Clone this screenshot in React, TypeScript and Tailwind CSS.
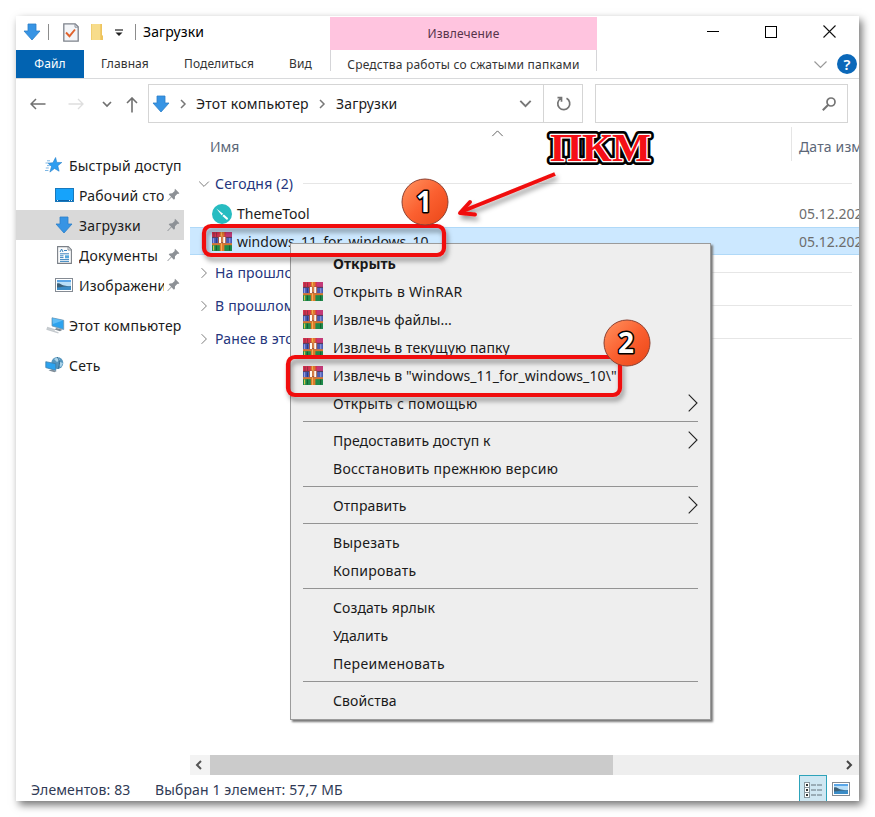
import type { ReactNode } from "react";
import clsx from "clsx";

const DownArrowIcon = () => (
  <svg width="18" height="18" viewBox="0 0 18 18" className="shrink-0">
    <path d="M5 1h8v7h4l-8 9-8-9h4z" fill="#3794e4" stroke="#2b7fc8" strokeWidth="0.8" />
  </svg>
);

const CheckDocIcon = () => (
  <svg width="16" height="19" viewBox="0 0 16 19" className="shrink-0">
    <path d="M.8.8h11.4l3 3v14.4H.8z" fill="#f3f5f8" stroke="#7d828b" strokeWidth="1.3" />
    <path d="M12 1v3.2h3" fill="none" stroke="#8c919b" />
    <path d="M3 9.5l3.5 3.7L12 6.5" fill="none" stroke="#e0622c" strokeWidth="1.9" />
  </svg>
);

const FolderIcon = () => (
  <svg width="12" height="17" viewBox="0 0 12 17" className="shrink-0">
    <path d="M0 1h10v11l2 1v4H0z" fill="#f7dc8b" />
    <path d="M9.3 1H11v11l1 1v4h-2.7z" fill="#eec45d" />
    <path d="M0 1h1v16H0z" fill="#f0ce70" />
  </svg>
);

const PinIcon = () => (
  <svg width="13" height="14" viewBox="0 0 13 14" className="shrink-0">
    <path
      d="M8 .8l4.4 4.4-1.2.7-.7-.1L8 8.2l-.1 2.6-1 .9-2.4-2.5L1 12.9l-.7.2.2-.7 3.6-3.6-2.4-2.4 1-1 2.5-.1 2.5-2.4-.1-.8z"
      fill="#8d9196"
    />
  </svg>
);

const StarIcon = () => (
  <svg width="17" height="16" viewBox="0 0 17 16" className="shrink-0">
    <path d="M10.6.5l1.2 4.9 5 .1-4 3.3 1.3 5.4-4.6-2.7-4.6 3.6 1.6-5.6L3 6.2l4.9-.5z" fill="#2e9df0" stroke="#2480cb" strokeWidth="0.6" />
    <path d="M.5 6h2.8M2 8.6h2.8M.8 11h3M0 13.5h3.4M2 3.8h3" stroke="#7eb7e4" />
  </svg>
);

const DesktopIcon = () => (
  <svg width="19" height="14" viewBox="0 0 19 14" className="shrink-0">
    <rect x=".5" y=".5" width="18" height="13" fill="#16a3fb" stroke="#1879bd" />
    <path d="M1 12.5h17" stroke="#0c62a8" />
    <path d="M2 12.5h2M14 12.5h3" stroke="#d7edfb" strokeDasharray="1 1" />
  </svg>
);

const DocumentIcon = () => (
  <svg width="15" height="18" viewBox="0 0 15 18" className="shrink-0">
    <path d="M.6.6h10.7l3.1 3.1v13.7H.6z" fill="#fbfcfd" stroke="#7b8087" strokeWidth="1.1" />
    <path d="M11 .8V4h3.2" fill="none" stroke="#8c9299" />
    <path d="M3 6l1.6-3L6 6M7 4.5h3M3 7.8h9M3 13.6h9M3 15.4h9" fill="none" stroke="#3b84be" />
    <path d="M3 9.8h3.5M3 11.6h3.5" stroke="#3b84be" />
    <rect x="8" y="9.3" width="4" height="3" fill="#57a7dc" />
  </svg>
);

const PictureIcon = ({ className }: { className?: string }) => (
  <svg width="18" height="14" viewBox="0 0 18 14" className={clsx("shrink-0", className)}>
    <rect x=".5" y=".5" width="17" height="13" fill="#fff" stroke="#858b93" />
    <path d="M2 2h14v10H2z" fill="#b9dff8" />
    <path d="M2 2h14v2H2z" fill="#5aa6e8" />
    <path d="M2 5.5c3-1 4 1.5 7 2s5 1 7 .5v2H2z" fill="#3c6078" />
    <path d="M2 9.6c5-.6 9-1.3 14-1V12H2z" fill="#3b8cc6" />
  </svg>
);

const ComputerIcon = () => (
  <svg width="19" height="17" viewBox="0 0 19 17" className="shrink-0">
    <path d="M6 .8l11.7 2.5v9.2L6 8.9z" fill="#2da3ee" stroke="#6d94ae" strokeWidth="0.8" />
    <path d="M6.5 1.3L17 3.6 7 7z" fill="#60bdf6" />
    <path d="M10.5 11l6 1.8-2.5 1.5-5.5-1.7z" fill="#7e8992" />
    <path d="M1 10.5l8 2.5M.5 12l12 3.9" stroke="#c5cace" strokeWidth="1.5" />
  </svg>
);

const NetworkIcon = () => (
  <svg width="19" height="18" viewBox="0 0 19 18" className="shrink-0">
    <circle cx="12.3" cy="7" r="6" fill="#5595bd" />
    <path d="M9 3l4-2 2 3-3 2zM15 6l3 1-2 4-2-1z" fill="#abd4ea" />
    <path d="M12 1c3 3 3 8 1 12" fill="none" stroke="#31698f" />
    <path d="M.8 5.7l10 2v6.7l-10-2.8z" fill="#2ca2ee" stroke="#3c7da9" strokeWidth="0.8" />
    <path d="M3.5 14.5l6 1.8 2.2-1.3-5-1.6z" fill="#808e99" />
  </svg>
);

const ThemeToolIcon = () => (
  <svg width="20" height="20" viewBox="0 0 20 20" className="shrink-0">
    <circle cx="10" cy="10" r="10" fill="#27bcc1" />
    <path d="M4.3 4.6l6.8 5.2-1.5 1.5z" fill="#fff" />
    <path d="M10.4 12l1.5-1.5 3.9 3.6c.7.9-.4 2.1-1.4 1.3z" fill="#fff" />
  </svg>
);

const WinRarIcon = () => (
  <svg width="20" height="19" viewBox="0 0 20 19" className="shrink-0">
    <path d="M0 0h20v5.6H0z" fill="#d8324f" />
    <path d="M14 0h6v5.6h-6z" fill="#c43a78" />
    <path d="M0 5.6h20v6.2H0z" fill="#4a5cb4" />
    <path d="M0 13h20v6H0z" fill="#1f8a4c" />
    <path d="M0 5.4h20" stroke="#4a3350" strokeWidth="0.9" />
    <path d="M0 11.2h20v2H0z" fill="#d8752c" />
    <path d="M2 .5v4.6M4.6.5v4.6" stroke="#8f2f45" />
    <path d="M1.6 6.2v4.8M17.8 6.2v4.8" stroke="#9aa5e4" />
    <path d="M4.4 6.2v4.8" stroke="#2b3a86" />
    <path d="M1.6 13.5v5" stroke="#d6c746" strokeWidth="1.2" />
    <path d="M4.4 13.5v5M17.6 13.5v5" stroke="#11602f" />
    <path d="M7.8 0h4.6v19H7.8z" fill="#dd7a2c" />
    <path d="M9 0h1v19H9z" fill="#f4ae55" />
    <path d="M6 4.6h8.2v6.6H6z" fill="#a15546" />
    <path d="M7 5h2v6H7zM11.2 5h2v6h-2z" fill="#fff8ef" />
    <path d="M9.4 3.4h1.5V10H9.4z" fill="#e38a45" />
  </svg>
);

interface ChevronProps {
  direction: "up" | "down" | "left" | "right";
  size?: number;
  className?: string;
  weight?: number;
}

const chevronPaths = {
  up: "M1 7l4-4 4 4",
  down: "M1 3l4 4 4-4",
  left: "M7 1L3 5l4 4",
  right: "M3 1l4 4-4 4",
};

const Chevron = ({ direction, size = 10, className, weight = 1.2 }: ChevronProps) => (
  <svg width={size} height={size} viewBox="0 0 10 10" className={clsx("shrink-0", className)}>
    <path d={chevronPaths[direction]} fill="none" stroke="currentColor" strokeWidth={weight} />
  </svg>
);

const TitleBar = () => (
  <div className="flex h-[63px] shrink-0 border-b border-[#d9dadc]">
    <div className="flex w-[314px] flex-col">
      <div className="flex h-[34px] items-center pb-[3px] pl-[7px]">
        <DownArrowIcon />
        <div className="ml-[7px] h-4 w-px bg-[#8c8c8c]" />
        <div className="ml-[14px] mt-[2px]"><CheckDocIcon /></div>
        <div className="ml-[12px]"><FolderIcon /></div>
        <svg width="8" height="8" viewBox="0 0 8 8" className="ml-[12px] mt-[3px]">
          <path d="M0 1h8" stroke="#222" strokeWidth="1.2" />
          <path d="M.5 3.5h7L4 7z" fill="#222" />
        </svg>
        <div className="ml-[12px] h-4 w-px bg-[#8c8c8c]" />
        <span className="ml-[7px] text-[14px] tracking-[0.1px]">Загрузки</span>
      </div>
      <div className="flex h-[28px] items-center text-[12px] tracking-[0.1px] text-[#333]">
        <span className="flex h-full w-[68px] items-center justify-center bg-[#0263b1] text-white">Файл</span>
        <span className="ml-[17px] w-[50px]">Главная</span>
        <span className="ml-[33px] w-[72px]">Поделиться</span>
        <span className="ml-[33px]">Вид</span>
      </div>
    </div>
    <div className="flex w-[267px] flex-col pt-px text-[12px]">
      <div className="flex h-[33px] items-center justify-center bg-[#ffc4df] tracking-[0.15px] text-[#56344a]">
        Извлечение
      </div>
      <div className="flex h-[21px] items-center justify-center border-x border-[#d5d5d8] pt-[8px] tracking-[0.21px] whitespace-nowrap text-[#333]">
        Средства работы со сжатыми папками
      </div>
    </div>
    <div className="flex flex-1 flex-col">
      <div className="flex h-[34px] items-center justify-end pb-[3px] pr-[23px]">
        <div className="mr-[46px] h-px w-3 bg-black" />
        <div className="mr-[46px] size-3 border border-black" />
        <svg width="13" height="13" viewBox="0 0 13 13">
          <path d="M.5.5l12 12M12.5.5l-12 12" stroke="#111" strokeWidth="1.1" />
        </svg>
      </div>
      <div className="flex h-[28px] items-center justify-end pr-[2px]">
        <Chevron direction="down" size={15} weight={0.8} className="mr-[9px] text-[#999]" />
        <span className="flex size-5 items-center justify-center rounded-full bg-[#0b68b9] text-[15px] font-semibold text-white">?</span>
      </div>
    </div>
  </div>
);

const AddressBar = () => (
  <div className="flex h-[44px] shrink-0 items-start pt-[5px]">
    <div className="flex h-[39px] w-[132px] items-center pl-[14px] text-[#707070]">
      <svg width="16" height="12" viewBox="0 0 16 12">
        <path d="M15.5 6H1M6 1L1 6l5 5" fill="none" stroke="#707070" strokeWidth="1.5" />
      </svg>
      <svg width="16" height="12" viewBox="0 0 16 12" className="ml-[22px]">
        <path d="M.5 6H15M10 1l5 5-5 5" fill="none" stroke="#dedede" strokeWidth="1.3" />
      </svg>
      <Chevron direction="down" className="ml-[18px]" weight={1.7} />
      <svg width="12" height="16" viewBox="0 0 12 16" className="ml-[14px] mt-[2px]">
        <path d="M6 15.5V1M1 6l5-5 5 5" fill="none" stroke="#707070" strokeWidth="1.6" />
      </svg>
    </div>
    <div className="flex h-[39px] w-[396px] items-center border border-[#d5d5d5] pl-[3px] text-[14px] text-[#1b1b1b]">
      <DownArrowIcon />
      <Chevron direction="right" className="ml-[8px] text-[#777]" weight={1.5} />
      <span className="ml-[8px] w-[113px] tracking-[0.22px] whitespace-nowrap">Этот компьютер</span>
      <Chevron direction="right" className="ml-[8px] text-[#777]" weight={1.5} />
      <span className="ml-[9px] tracking-[0.15px]">Загрузки</span>
      <Chevron direction="down" size={13} className="ml-auto mr-[11px] text-[#777]" weight={1.5} />
    </div>
    <div className="-ml-px flex h-[39px] w-10 items-center justify-center border border-[#d5d5d5]">
      <svg width="16" height="16" viewBox="0 0 16 16" className="ml-[2px]">
        <path d="M10.5 2.3a6 6 0 1 1-6 .3M1.5 1.7h4v4" fill="none" stroke="#747474" strokeWidth="1.7" />
      </svg>
    </div>
    <div className="ml-[12px] flex h-[39px] w-[253px] items-center justify-end border border-[#d5d5d5] pr-[11px]">
      <svg width="14" height="14" viewBox="0 0 14 14">
        <circle cx="9" cy="5" r="4" fill="none" stroke="#747474" strokeWidth="1.7" />
        <path d="M6.3 7.7L.8 13.2" stroke="#747474" strokeWidth="2" />
      </svg>
    </div>
  </div>
);

interface NavItemProps {
  icon: ReactNode;
  label: string;
  active?: boolean;
}

const PinnedItem = ({ icon, label, active }: NavItemProps) => (
  <div className={clsx("flex h-[30px] w-[168px] items-center pl-[38px] pr-1", active && "bg-[#d9d9d9]")}>
    <div className="flex w-5 justify-center">{icon}</div>
    <span className="ml-[5px] w-[85px] overflow-hidden whitespace-nowrap">{label}</span>
    <div className="ml-auto"><PinIcon /></div>
  </div>
);

const Sidebar = () => (
  <nav className="w-[174px] shrink-0 pt-[27px] text-[14px] tracking-[0.2px] text-[#1b1b1b]">
    <div className="flex h-[30px] items-center gap-[7px] pl-[29px] whitespace-nowrap"><StarIcon />Быстрый доступ</div>
    <PinnedItem icon={<DesktopIcon />} label="Рабочий стол" />
    <PinnedItem icon={<DownArrowIcon />} label="Загрузки" active />
    <PinnedItem icon={<DocumentIcon />} label="Документы" />
    <PinnedItem icon={<PictureIcon />} label="Изображения" />
    <div className="mt-[10px] flex h-[30px] items-center gap-[4px] pl-[30px] whitespace-nowrap"><ComputerIcon />Этот компьютер</div>
    <div className="mt-[10px] flex h-[30px] items-center gap-[5px] pl-[29px]"><NetworkIcon />Сеть</div>
  </nav>
);

const GroupHeader = ({ label, open }: { label: string; open?: boolean }) => (
  <div className="flex h-[33px] items-center pl-2 pr-[7px] tracking-[0.2px] text-[#25357d]">
    <Chevron direction={open ? "down" : "right"} size={12} weight={0.8} className="text-[#777]" />
    <span className="ml-[5px] whitespace-nowrap">{label}</span>
    <div className="ml-[10px] h-px flex-1 bg-[#e6e6e6]" />
  </div>
);

const FileRow = ({ icon, name, selected }: { icon: ReactNode; name: string; selected?: boolean }) => (
  <div
    className={clsx(
      "flex items-center overflow-hidden pl-[22px] whitespace-nowrap text-[#1b1b1b]",
      selected ? "h-[28px] border-y border-[#b0d9f8] bg-[#cce8ff]" : "h-[27px]"
    )}
  >
    {icon}
    <span className="ml-[5px] w-[562px] shrink-0">{name}</span>
    <span className="shrink-0 text-[#6d6d6d]">05.12.2021</span>
  </div>
);

const FileList = () => (
  <main className="flex min-w-0 flex-1 flex-col overflow-hidden text-[14px]">
    <div className="flex h-[44px] shrink-0 text-[#5c6778]">
      <span className="w-[301px] pl-[20px] pt-[13px]">Имя</span>
      <Chevron direction="up" size={13} weight={0.7} className="mt-1 text-[#555]" />
      <div className="ml-auto mt-1 h-[34px] w-[68px] overflow-hidden border-l border-[#e5e5e5] pl-[7px] pt-[9px] tracking-[0.15px] whitespace-nowrap">
        Дата изменения
      </div>
    </div>
    <GroupHeader label="Сегодня (2)" open />
    <FileRow icon={<ThemeToolIcon />} name="ThemeTool" />
    <FileRow icon={<WinRarIcon />} name="windows_11_for_windows_10" selected />
    <div className="pt-px">
      <GroupHeader label="На прошлой неделе (5)" />
      <GroupHeader label="В прошлом месяце (31)" />
      <GroupHeader label="Ранее в этом году (45)" />
    </div>
    <div className="mt-auto flex h-[20px] items-center bg-[#eee]">
      <div className="flex h-full w-[20px] items-center justify-center bg-[#f3f3f3]">
        <Chevron direction="left" className="-ml-[2px] text-[#555]" weight={2} />
      </div>
      <div className="h-full w-[403px] bg-[#cbcbcb]" />
      <Chevron direction="right" className="ml-auto mr-[5px] text-[#444]" weight={2} />
    </div>
  </main>
);

const StatusBar = () => (
  <div className="flex h-[26px] shrink-0 items-stretch pl-[15px] text-[14px] tracking-[0.12px] text-[#303a55]">
    <span className="w-[124px] pt-[5px] leading-5">Элементов: 83</span>
    <span className="pt-[5px] leading-5">Выбран 1 элемент: 57,7 МБ</span>
    <div className="ml-auto flex w-[28px] items-center justify-center border border-b-0 border-[#2da3ba] bg-[#cfe7f2] pt-[3px]">
      <svg width="18" height="16" viewBox="0 0 18 16">
        {[0.5, 5.5, 10.5].map((y) => (
          <g key={y}>
            <rect x=".5" y={y} width="5" height="5" fill="#fff" stroke="#8997a0" />
            <path d={`M2 ${y + 2.5}h2`} stroke="#333" strokeWidth="2" />
            <path d={`M7 ${y + 2.5}h5M13 ${y + 2.5}h5`} stroke="#65727a" />
          </g>
        ))}
      </svg>
    </div>
    <PictureIcon className="mr-[9px] ml-[5px] mt-[7px]" />
  </div>
);

interface MenuEntry {
  label: string;
  rar?: boolean;
  bold?: boolean;
  wide?: boolean;
  submenu?: boolean;
}

const menuSections: MenuEntry[][] = [
  [
    { label: "Открыть", bold: true },
    { label: "Открыть в WinRAR", rar: true, wide: true },
    { label: "Извлечь файлы...", rar: true },
    { label: "Извлечь в текущую папку", rar: true },
    { label: 'Извлечь в "windows_11_for_windows_10\\"', rar: true },
    { label: "Открыть с помощью", submenu: true, wide: true },
  ],
  [
    { label: "Предоставить доступ к", submenu: true },
    { label: "Восстановить прежнюю версию", wide: true },
  ],
  [{ label: "Отправить", submenu: true }],
  [{ label: "Вырезать", wide: true }, { label: "Копировать", wide: true }],
  [{ label: "Создать ярлык" }, { label: "Удалить" }, { label: "Переименовать", wide: true }],
  [{ label: "Свойства" }],
];

const ContextMenu = () => (
  <div className="absolute left-[290px] top-[243px] h-[477px] w-[421px] border border-[#9b9b9b] bg-[#eee] pl-3 pr-3 pt-[5px] text-[14px] text-[#1a1a1a] shadow-[2px_2px_2px_#777]">
    {menuSections.map((section, i) => (
      <div key={i} className={clsx(i > 0 && "mt-1 border-t border-[#939393] pt-1")}>
        {section.map((item) => (
          <div key={item.label} className="flex h-7 items-center whitespace-nowrap">
            <div className="w-[30px]">{item.rar && <WinRarIcon />}</div>
            <span
              className={clsx(
                item.bold && "font-bold",
                item.wide ? "tracking-[0.3px]" : !item.bold && "tracking-[0.09px]"
              )}
            >
              {item.label}
            </span>
            {item.submenu && (
              <svg width="10" height="18" viewBox="0 0 10 18" className="ml-auto">
                <path d="M.7.7L9 9 .7 17.3" fill="none" stroke="#222" strokeWidth="1.1" />
              </svg>
            )}
          </div>
        ))}
      </div>
    ))}
  </div>
);

const Annotations = () => (
  <svg width="875" height="817" viewBox="0 0 875 817" className="pointer-events-none absolute left-0 top-0">
    <defs>
      <linearGradient id="badge" x1="0" y1="0" x2="1" y2="1">
        <stop offset="0" stopColor="#ff9461" />
        <stop offset="0.5" stopColor="#fb6030" />
        <stop offset="1" stopColor="#ea4617" />
      </linearGradient>
      <filter id="drop" x="-20%" y="-40%" width="140%" height="200%">
        <feDropShadow dx="2" dy="4" stdDeviation="2.5" floodColor="#000" floodOpacity="0.4" />
      </filter>
    </defs>
    <g fill="none" stroke="#f00c0c" strokeWidth="4.2" filter="url(#drop)">
      <rect x="204" y="226" width="240" height="29" rx="7" />
      <rect x="288" y="357" width="332" height="38" rx="7" />
    </g>
    <g stroke="#f00c0c" strokeLinecap="butt" fill="none" filter="url(#drop)">
      <path d="M555 174L463 211" strokeWidth="4" />
      <path d="M470 202L460 213l15 1.5" strokeWidth="4" strokeLinejoin="round" strokeLinecap="round" />
    </g>
    {[
      { n: "1", x: 425, y: 202 },
      { n: "2", x: 627, y: 343 },
    ].map(({ n, x, y }) => (
      <g key={n}>
        <circle cx={x} cy={y} r="23" fill="url(#badge)" stroke="#8c4030" strokeWidth="1" />
        <text
          x={x - 1}
          y={y + 10}
          textAnchor="middle"
          fontSize="28"
          fontWeight="bold"
          fill="#fff"
          stroke="#000"
          strokeWidth="3"
          paintOrder="stroke"
          strokeLinejoin="round"
        >
          {n}
        </text>
      </g>
    ))}
    <g fontFamily="Liberation Serif, serif" fontSize="41" fontWeight="bold" strokeLinejoin="round">
      <text
        x="550"
        y="161"
        textLength="101"
        lengthAdjust="spacingAndGlyphs"
        fill="#f50f16"
        stroke="#000"
        strokeWidth="8"
        paintOrder="stroke"
        aria-hidden="true"
      >
        ПКМ
      </text>
      <text
        x="550"
        y="161"
        textLength="101"
        lengthAdjust="spacingAndGlyphs"
        fill="#f50f16"
        stroke="#fff"
        strokeWidth="2.6"
        paintOrder="stroke"
      >
        ПКМ
      </text>
    </g>
  </svg>
);

export default function App() {
  return (
    <div className="relative h-[817px] w-[875px] overflow-hidden bg-white p-4 font-['Noto_Sans',sans-serif]">
      <div className="flex h-[785px] w-[843px] flex-col bg-white shadow-[3px_4px_8px_0px_rgba(0,0,0,0.55)]">
        <TitleBar />
        <AddressBar />
        <div className="flex min-h-0 flex-1">
          <Sidebar />
          <FileList />
        </div>
        <StatusBar />
      </div>
      <ContextMenu />
      <Annotations />
    </div>
  );
}
